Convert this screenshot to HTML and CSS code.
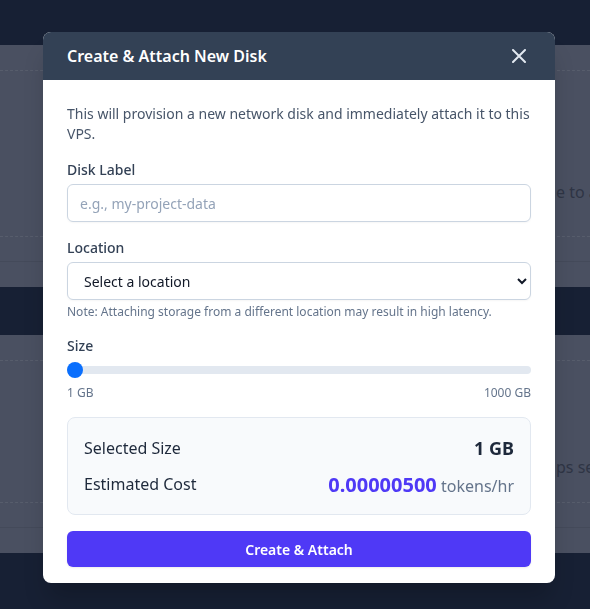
FILE: index.html
```html
<!DOCTYPE html>
<html lang="en">
<head>
<meta charset="utf-8">
<title>Create &amp; Attach New Disk</title>
<link rel="stylesheet" href="styles.css">
</head>
<body>
<div class="page">
  <section class="bg-card bg-card-first">
    <div class="bg-dash"></div>
    <div class="bg-body bg-body-first"><p class="bg-text">e to attach storage</p></div>
    <div class="bg-dash"></div>
    <div class="bg-foot"></div>
  </section>
  <section class="bg-card bg-card-second">
    <div class="bg-dash"></div>
    <div class="bg-body bg-body-second"><p class="bg-text">ps secure</p></div>
    <div class="bg-dash"></div>
    <div class="bg-foot"></div>
  </section>
</div>

<div class="overlay">
  <div class="modal">
    <header class="modal-header">
      <h2 class="modal-title">Create &amp; Attach New Disk</h2>
      <button class="close-btn" aria-label="Close">
        <svg width="14" height="14" viewBox="0 0 14 14"><path d="M1 1L13 13M13 1L1 13" stroke="#e2e8f0" stroke-width="2" stroke-linecap="round"/></svg>
      </button>
    </header>
    <div class="modal-body">
      <p class="intro">This will provision a new network disk and immediately attach it to this VPS.</p>

      <label class="field-label" for="disk-label">Disk Label</label>
      <input id="disk-label" class="text-input" type="text" placeholder="e.g., my-project-data">

      <label class="field-label field-gap" for="location">Location</label>
      <select id="location" class="select-input">
        <option>Select a location</option>
      </select>
      <p class="note">Note: Attaching storage from a different location may result in high latency.</p>

      <label class="field-label field-gap-size" for="size">Size</label>
      <input id="size" class="range" type="range" min="1" max="1000" value="1">
      <div class="range-labels"><span>1 GB</span><span>1000 GB</span></div>

      <div class="summary">
        <div class="summary-row">
          <span class="summary-key">Selected Size</span>
          <span class="summary-size">1 GB</span>
        </div>
        <div class="summary-row">
          <span class="summary-key">Estimated Cost</span>
          <span class="summary-cost"><strong class="cost-num">0.00000500</strong> <span class="cost-unit">tokens/hr</span></span>
        </div>
      </div>

      <button class="primary-btn">Create &amp; Attach</button>
    </div>
  </div>
</div>
</body>
</html>
```

FILE: styles.css
```css
* { box-sizing: border-box; }

html, body {
  margin: 0;
  height: 100%;
}

body {
  background: #172034;
  font-family: "Noto Sans", "Open Sans", sans-serif;
  overflow: hidden;
}

.page {
  padding-top: 45px;
}

.bg-card {
  background: #4a5061;
  display: flex;
  flex-direction: column;
  overflow: hidden;
}

.bg-card-first { height: 242px; }
.bg-card-second { height: 218px; margin-top: 48px; }

.bg-dash {
  border-top: 1px dashed #575d6c;
}
.bg-card .bg-dash:first-child { margin-top: 25px; }

.bg-body {
  flex: 1;
}
.bg-body-first { padding-top: 111px; }
.bg-body-second { padding-top: 96px; }

.bg-text {
  margin: 0;
  padding-left: 556px;
  white-space: nowrap;
  font-size: 16px;
  line-height: 20px;
  color: #2f3545;
}

.bg-foot {
  height: 26px;
  margin-top: 24px;
  border-top: 1px solid #444a5a;
}

.overlay {
  position: fixed;
  inset: 0;
  padding: 32px 0 0 43px;
}

.modal {
  width: 512px;
  background: #ffffff;
  border-radius: 8px;
  overflow: hidden;
  box-shadow: 0 20px 25px -5px rgba(0,0,0,0.2);
}

.modal-header {
  height: 48px;
  background: #334155;
  display: flex;
  align-items: center;
  justify-content: space-between;
  padding: 0 24px;
}

.modal-title {
  margin: 0;
  font-size: 16px;
  font-weight: 600;
  color: #ffffff;
}

.close-btn {
  background: none;
  border: 0;
  padding: 0;
  margin-right: 5px;
  display: flex;
  cursor: pointer;
}

.modal-body {
  padding: 24px 24px 16px;
  display: flex;
  flex-direction: column;
}

.intro {
  margin: 0 0 16px;
  font-size: 14px;
  line-height: 20px;
  color: #475569;
}

.field-label {
  display: block;
  font-size: 14px;
  line-height: 20px;
  font-weight: 500;
  color: #334155;
  margin-bottom: 4px;
}

.field-gap { margin-top: 16px; }
.field-gap-size { margin-top: 16px; margin-bottom: 10px; }

.text-input,
.select-input {
  width: 100%;
  height: 38px;
  border: 1px solid #cbd5e1;
  border-radius: 6px;
  background: #ffffff;
  font-family: "Noto Sans", "Open Sans", sans-serif;
  font-size: 14px;
  color: #111827;
  box-shadow: 0 1px 2px rgba(0,0,0,0.04);
}

.text-input {
  padding: 0 12px;
}
.text-input::placeholder { color: #94a3b8; }

.select-input {
  padding: 0 8px 0 12px;
}

.note {
  margin: 4px 0 0;
  font-size: 12px;
  line-height: 16px;
  color: #64748b;
}

.range {
  -webkit-appearance: none;
  appearance: none;
  width: 100%;
  height: 8px;
  margin: 0;
  background: #e2e8f0;
  border-radius: 8px;
}
.range::-webkit-slider-thumb {
  -webkit-appearance: none;
  appearance: none;
  width: 16px;
  height: 16px;
  border-radius: 50%;
  background: #0a6ffd;
  border: 0;
}

.range-labels {
  display: flex;
  justify-content: space-between;
  margin-top: 11px;
  font-size: 12px;
  line-height: 16px;
  color: #64748b;
}

.summary {
  margin-top: 16px;
  background: #f8fafc;
  border: 1px solid #e2e8f0;
  border-radius: 8px;
  padding: 16px;
  display: flex;
  flex-direction: column;
  gap: 8px;
}

.summary-row {
  height: 28px;
  display: flex;
  align-items: center;
  justify-content: space-between;
}

.summary-key {
  font-size: 16px;
  color: #1e293b;
}

.summary-size {
  font-size: 18px;
  font-weight: 700;
  color: #1e293b;
}

.cost-num {
  font-size: 20px;
  font-weight: 700;
  color: #4f39f6;
}

.cost-unit {
  font-size: 16px;
  color: #64748b;
}

.primary-btn {
  margin-top: 16px;
  height: 36px;
  border: 0;
  border-radius: 6px;
  background: #4f39f6;
  color: #ffffff;
  font-family: "Noto Sans", "Open Sans", sans-serif;
  font-size: 14px;
  font-weight: 600;
  cursor: pointer;
  box-shadow: 0 1px 2px rgba(0,0,0,0.08);
}
```
